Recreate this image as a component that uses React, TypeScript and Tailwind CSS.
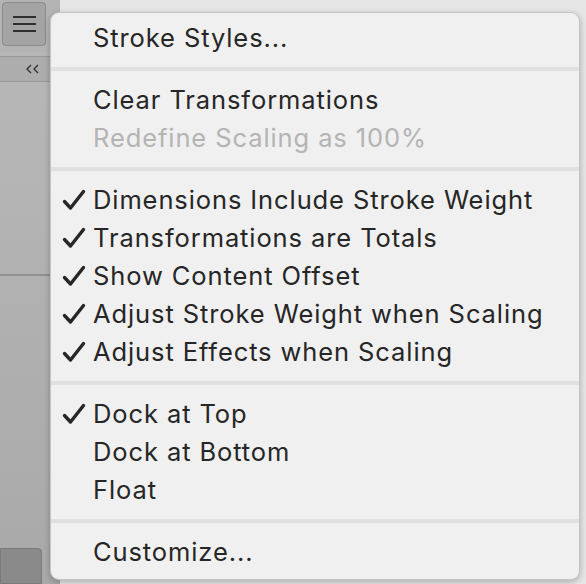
type Item = { label: string; checked?: boolean; disabled?: boolean };

const groups: Item[][] = [
    [{ label: "Stroke Styles..." }],
    [{ label: "Clear Transformations" }, { label: "Redefine Scaling as 100%", disabled: true }],
    [
        { label: "Dimensions Include Stroke Weight", checked: true },
        { label: "Transformations are Totals", checked: true },
        { label: "Show Content Offset", checked: true },
        { label: "Adjust Stroke Weight when Scaling", checked: true },
        { label: "Adjust Effects when Scaling", checked: true },
    ],
    [{ label: "Dock at Top", checked: true }, { label: "Dock at Bottom" }, { label: "Float" }],
    [{ label: "Customize..." }],
];

function CheckMark() {
    return (
        <svg width="24" height="22" viewBox="0 0 24 22" fill="none">
            <path d="M2.5 12.5 L8.5 19 L21.5 2.5" stroke="#262626" strokeWidth="3.4" strokeLinecap="round" strokeLinejoin="round" />
        </svg>
    );
}

function MenuRow({ item }: { item: Item }) {
    return (
        <div className={`h-[38px] flex items-center ${item.disabled ? "text-[#b4b4b4]" : "text-[#262626]"}`}>
            <div className="w-[42px] flex justify-end pr-[7px]">
                {item.checked && <CheckMark />}
            </div>
            <span>{item.label}</span>
        </div>
    );
}

export default function App() {
    return (
        <div className="relative w-[586px] h-[584px] overflow-hidden bg-[#e6e6e6] font-['Inter','Liberation_Sans',sans-serif]">
            {/* Side panel behind */}
            <div className="absolute left-0 top-0 w-[60px] h-full flex flex-col bg-gradient-to-b from-[#b9b9b9] to-[#a9a9a9]">
                <div className="h-[52px] flex items-start p-[2px] bg-[#b4b4b4]">
                    <div className="w-[44px] h-[44px] rounded-[4px] border border-[#8c8c8c] bg-[#a4a4a4] flex flex-col items-center justify-center gap-[5px]">
                        <div className="w-[23px] h-[2px] bg-[#2e2e2e]" />
                        <div className="w-[23px] h-[2px] bg-[#2e2e2e]" />
                        <div className="w-[23px] h-[2px] bg-[#2e2e2e]" />
                    </div>
                </div>
                <div className="h-[26px] mt-[4px] border-y border-[#999] bg-[#adadad] flex items-center justify-end pr-[20px]">
                    <svg width="14" height="10" viewBox="0 0 14 10" fill="none">
                        <path d="M5 1 L1 5 L5 9 M12 1 L8 5 L12 9" stroke="#333" strokeWidth="1.4" />
                    </svg>
                </div>
                <div className="h-[194px] border-b-2 border-[#909090]" />
                <div className="flex-1" />
                <div className="h-[36px] w-[42px] rounded-tr-[4px] bg-[#8a8a8a] border border-[#7a7a7a]" />
            </div>

            {/* Menu */}
            <div className="absolute left-[50px] top-[12px] w-[530px] h-[568px] rounded-[9px] bg-[#f0f0f0] border border-[#c4c4c4] shadow-[0_2px_6px_rgba(0,0,0,0.25)] pt-[6px] text-[25.5px] tracking-[0.9px]">
                {groups.map((g, gi) => (
                    <div key={gi}>
                        {gi > 0 && (
                            <div className="h-[24px] flex items-center">
                                <div className="w-full h-[4px] bg-[#e0e0e0]" />
                            </div>
                        )}
                        {g.map((item) => (
                            <MenuRow key={item.label} item={item} />
                        ))}
                    </div>
                ))}
            </div>
        </div>
    );
}
